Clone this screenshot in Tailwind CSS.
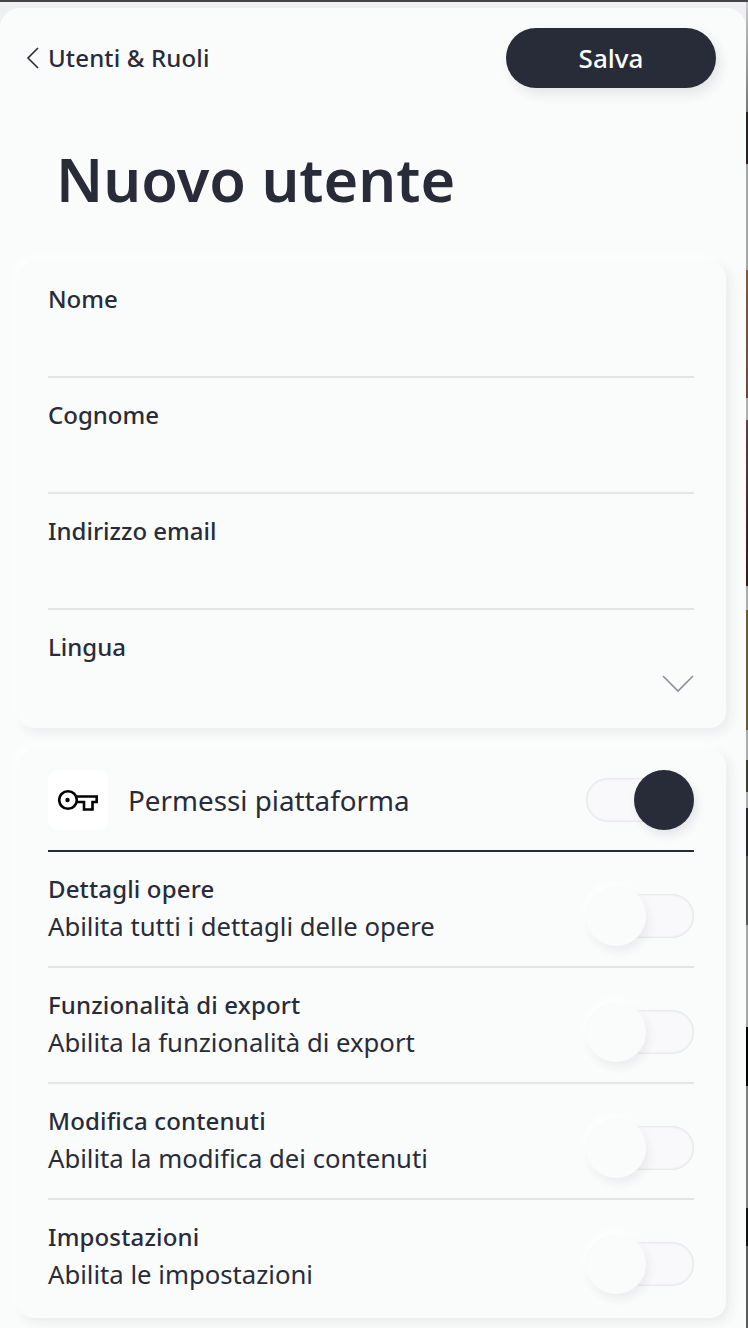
<!DOCTYPE html>
<html lang="en">
<head>
    <meta charset="UTF-8">
    <title>Nuovo utente</title>
    <script src="https://cdn.jsdelivr.net/npm/@tailwindcss/browser@4"></script>
</head>
<body class="w-[748px] h-[1328px] overflow-hidden bg-[#f0f0f3] font-['Noto_Sans',sans-serif] text-[#282c38]">
    <div class="h-[2px] bg-[#444548]"></div>
    <div class="flex">
        <main class="w-[746px] h-[1326px] mt-[6px] pr-[20px] pl-[18px] rounded-t-[20px] bg-[#fafbfb]">
            <!-- Top bar -->
            <header class="flex items-center justify-between h-[60px] mt-[20px] pr-[10px]">
                <a class="flex items-center gap-[8px] pl-[7px] text-[24px] tracking-[0.15px] font-medium">
                    <svg width="15" height="24" viewBox="0 0 15 24" fill="none" stroke="#282c38" stroke-width="1.6"><path d="M13 2 3 12l10 10"/></svg>
                    Utenti &amp; Ruoli
                </a>
                <button class="w-[210px] h-[60px] rounded-full bg-[#282c38] text-white text-[26px] font-medium shadow-[4px_6px_12px_rgba(40,44,56,0.1)]">Salva</button>
            </header>

            <h1 class="mt-[50px] pl-[38px] text-[59.5px] leading-[82px] font-semibold">Nuovo utente</h1>

            <!-- Anagrafica -->
            <section class="mt-[42px] pl-[30px] pr-[32px] h-[466px] rounded-[16px] bg-[#fafbfb] shadow-[4px_4px_12px_rgba(40,44,56,0.08),-4px_-4px_8px_#ffffff]">
                <div class="h-[116px] pt-[19px] border-b-2 border-[#e3e4e4] text-[24px] leading-[36px] font-medium">Nome</div>
                <div class="h-[116px] pt-[19px] border-b-2 border-[#e3e4e4] text-[24px] leading-[36px] font-medium">Cognome</div>
                <div class="h-[116px] pt-[19px] border-b-2 border-[#e3e4e4] text-[24px] leading-[36px] font-medium">Indirizzo email</div>
                <div class="relative h-[116px] pt-[19px] text-[24px] leading-[36px] font-medium">
                    Lingua
                    <svg class="absolute right-0 top-[64px]" width="32" height="20" viewBox="0 0 32 20" fill="none" stroke="#8d909a" stroke-width="1.6"><path d="M1 2 16 17 31 2"/></svg>
                </div>
            </section>

            <!-- Permessi -->
            <section class="mt-[22px] pl-[30px] pr-[32px] h-[568px] rounded-[16px] bg-[#fafbfb] shadow-[4px_4px_12px_rgba(40,44,56,0.08),-4px_-4px_8px_#ffffff]">
                <div class="flex items-center justify-between h-[102px] border-b-2 border-[#282c38]">
                    <div class="flex items-center gap-[20px]">
                        <div class="flex items-center justify-center w-[60px] h-[60px] rounded-[10px] bg-white">
                            <svg width="40" height="22" viewBox="0 0 40 22" fill="none" stroke="#000" stroke-width="2.6"><circle cx="10" cy="11" r="8.800"/><circle cx="9.500" cy="11" r="2.200" fill="#000" stroke="none"/><path d="M18.500 7.500H38.700V13H34.500V20.500H26V13H18.500"/></svg>
                        </div>
                        <span class="pt-[2px] text-[27.8px]">Permessi piattaforma</span>
                    </div>
                    <div class="relative w-[108px] h-[44px] rounded-full bg-[#f9f9fb] shadow-[inset_0_0_3px_rgba(40,44,56,0.2)]">
                        <div class="absolute right-0 top-[-8px] w-[60px] h-[60px] rounded-full bg-[#282c38] shadow-[3px_5px_10px_rgba(40,44,56,0.1)]"></div>
                    </div>
                </div>

                <div class="flex items-center justify-between h-[116px] border-b-2 border-[#e3e4e4]">
                    <div class="mb-[3px] leading-[38px]">
                        <div class="text-[24px] tracking-[0.15px] font-medium">Dettagli opere</div>
                        <div class="text-[25.7px]">Abilita tutti i dettagli delle opere</div>
                    </div>
                    <div class="relative w-[108px] h-[44px] mt-[14px] rounded-full bg-[#f9f9fb] shadow-[inset_0_0_3px_rgba(40,44,56,0.2)]">
                        <div class="absolute left-0 top-[-8px] w-[60px] h-[60px] rounded-full bg-[#fafbfb] shadow-[3px_5px_10px_rgba(40,44,56,0.07),-2px_-3px_6px_#ffffff]"></div>
                    </div>
                </div>

                <div class="flex items-center justify-between h-[116px] border-b-2 border-[#e3e4e4]">
                    <div class="mb-[3px] leading-[38px]">
                        <div class="text-[24px] tracking-[0.15px] font-medium">Funzionalità di export</div>
                        <div class="text-[25.7px]">Abilita la funzionalità di export</div>
                    </div>
                    <div class="relative w-[108px] h-[44px] mt-[14px] rounded-full bg-[#f9f9fb] shadow-[inset_0_0_3px_rgba(40,44,56,0.2)]">
                        <div class="absolute left-0 top-[-8px] w-[60px] h-[60px] rounded-full bg-[#fafbfb] shadow-[3px_5px_10px_rgba(40,44,56,0.07),-2px_-3px_6px_#ffffff]"></div>
                    </div>
                </div>

                <div class="flex items-center justify-between h-[116px] border-b-2 border-[#e3e4e4]">
                    <div class="mb-[3px] leading-[38px]">
                        <div class="text-[24px] tracking-[0.15px] font-medium">Modifica contenuti</div>
                        <div class="text-[25.7px]">Abilita la modifica dei contenuti</div>
                    </div>
                    <div class="relative w-[108px] h-[44px] mt-[14px] rounded-full bg-[#f9f9fb] shadow-[inset_0_0_3px_rgba(40,44,56,0.2)]">
                        <div class="absolute left-0 top-[-8px] w-[60px] h-[60px] rounded-full bg-[#fafbfb] shadow-[3px_5px_10px_rgba(40,44,56,0.07),-2px_-3px_6px_#ffffff]"></div>
                    </div>
                </div>

                <div class="flex items-center justify-between h-[116px]">
                    <div class="mb-[5px] leading-[38px]">
                        <div class="text-[24px] tracking-[0.15px] font-medium">Impostazioni</div>
                        <div class="text-[25.7px]">Abilita le impostazioni</div>
                    </div>
                    <div class="relative w-[108px] h-[44px] mt-[12px] rounded-full bg-[#f9f9fb] shadow-[inset_0_0_3px_rgba(40,44,56,0.2)]">
                        <div class="absolute left-0 top-[-8px] w-[60px] h-[60px] rounded-full bg-[#fafbfb] shadow-[3px_5px_10px_rgba(40,44,56,0.07),-2px_-3px_6px_#ffffff]"></div>
                    </div>
                </div>
            </section>
        </main>
        <!-- Sliver of the page behind the panel -->
        <div class="flex flex-col w-[2px] h-[1326px]">
            <div class="h-[110px] bg-gradient-to-b from-[#c8c8c8] to-[#777777]"></div>
            <div class="h-[52px] bg-[#2a2020]"></div>
            <div class="h-[106px] bg-[#a5a5a5]"></div>
            <div class="h-[128px] bg-gradient-to-b from-[#85583c] to-[#6b4a34]"></div>
            <div class="h-[22px] bg-[#b0b0b0]"></div>
            <div class="h-[166px] bg-gradient-to-b from-[#5f3f4a] to-[#3a1515]"></div>
            <div class="h-[24px] bg-[#aaaaaa]"></div>
            <div class="h-[120px] bg-[#6b5a2a]"></div>
            <div class="h-[30px] bg-[#aaaaaa]"></div>
            <div class="h-[32px] bg-[#3c3f2c]"></div>
            <div class="h-[16px] bg-[#aaaaaa]"></div>
            <div class="h-[48px] bg-[#1f2a2a]"></div>
            <div class="h-[69px] bg-[#555555]"></div>
            <div class="h-[102px] bg-[#a5a5a5]"></div>
            <div class="h-[59px] bg-black"></div>
            <div class="h-[122px] bg-[#7d7d7d]"></div>
            <div class="h-[38px] bg-[#111111]"></div>
            <div class="flex-1 bg-[#5a5a5a]"></div>
        </div>
    </div>
</body>
</html>
